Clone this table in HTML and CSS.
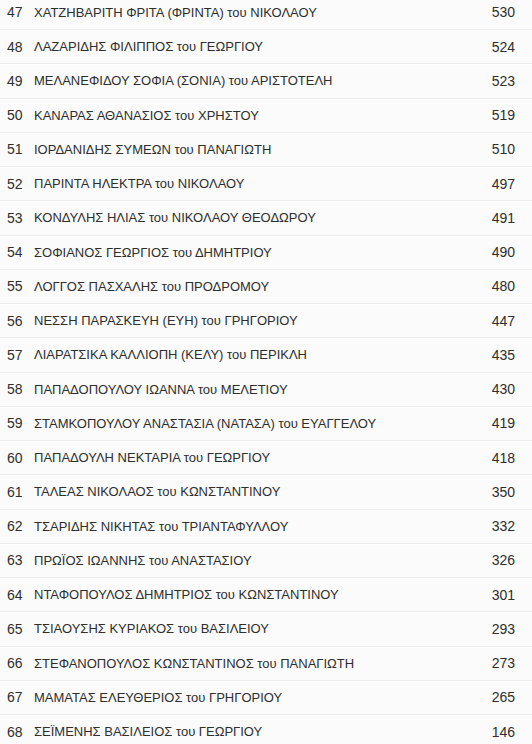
FILE: index.html
```html
<!DOCTYPE html>
<html lang="el">
<head>
<meta charset="utf-8">
<link rel="stylesheet" href="styles.css">
</head>
<body>
<table class="results">
<tbody>
<tr><td class="num">47</td><td class="name">ΧΑΤΖΗΒΑΡΙΤΗ ΦΡΙΤΑ (ΦΡΙΝΤΑ) του ΝΙΚΟΛΑΟΥ</td><td class="votes">530</td></tr>
<tr><td class="num">48</td><td class="name">ΛΑΖΑΡΙΔΗΣ ΦΙΛΙΠΠΟΣ του ΓΕΩΡΓΙΟΥ</td><td class="votes">524</td></tr>
<tr><td class="num">49</td><td class="name">ΜΕΛΑΝΕΦΙΔΟΥ ΣΟΦΙΑ (ΣΟΝΙΑ) του ΑΡΙΣΤΟΤΕΛΗ</td><td class="votes">523</td></tr>
<tr><td class="num">50</td><td class="name">ΚΑΝΑΡΑΣ ΑΘΑΝΑΣΙΟΣ του ΧΡΗΣΤΟΥ</td><td class="votes">519</td></tr>
<tr><td class="num">51</td><td class="name">ΙΟΡΔΑΝΙΔΗΣ ΣΥΜΕΩΝ του ΠΑΝΑΓΙΩΤΗ</td><td class="votes">510</td></tr>
<tr><td class="num">52</td><td class="name">ΠΑΡΙΝΤΑ ΗΛΕΚΤΡΑ του ΝΙΚΟΛΑΟΥ</td><td class="votes">497</td></tr>
<tr><td class="num">53</td><td class="name">ΚΟΝΔΥΛΗΣ ΗΛΙΑΣ του ΝΙΚΟΛΑΟΥ ΘΕΟΔΩΡΟΥ</td><td class="votes">491</td></tr>
<tr><td class="num">54</td><td class="name">ΣΟΦΙΑΝΟΣ ΓΕΩΡΓΙΟΣ του ΔΗΜΗΤΡΙΟΥ</td><td class="votes">490</td></tr>
<tr><td class="num">55</td><td class="name">ΛΟΓΓΟΣ ΠΑΣΧΑΛΗΣ του ΠΡΟΔΡΟΜΟΥ</td><td class="votes">480</td></tr>
<tr><td class="num">56</td><td class="name">ΝΕΣΣΗ ΠΑΡΑΣΚΕΥΗ (ΕΥΗ) του ΓΡΗΓΟΡΙΟΥ</td><td class="votes">447</td></tr>
<tr><td class="num">57</td><td class="name">ΛΙΑΡΑΤΣΙΚΑ ΚΑΛΛΙΟΠΗ (ΚΕΛΥ) του ΠΕΡΙΚΛΗ</td><td class="votes">435</td></tr>
<tr><td class="num">58</td><td class="name">ΠΑΠΑΔΟΠΟΥΛΟΥ ΙΩΑΝΝΑ του ΜΕΛΕΤΙΟΥ</td><td class="votes">430</td></tr>
<tr><td class="num">59</td><td class="name">ΣΤΑΜΚΟΠΟΥΛΟΥ ΑΝΑΣΤΑΣΙΑ (ΝΑΤΑΣΑ) του ΕΥΑΓΓΕΛΟΥ</td><td class="votes">419</td></tr>
<tr><td class="num">60</td><td class="name">ΠΑΠΑΔΟΥΛΗ ΝΕΚΤΑΡΙΑ του ΓΕΩΡΓΙΟΥ</td><td class="votes">418</td></tr>
<tr><td class="num">61</td><td class="name">ΤΑΛΕΑΣ ΝΙΚΟΛΑΟΣ του ΚΩΝΣΤΑΝΤΙΝΟΥ</td><td class="votes">350</td></tr>
<tr><td class="num">62</td><td class="name">ΤΣΑΡΙΔΗΣ ΝΙΚΗΤΑΣ του ΤΡΙΑΝΤΑΦΥΛΛΟΥ</td><td class="votes">332</td></tr>
<tr><td class="num">63</td><td class="name">ΠΡΩΪΟΣ ΙΩΑΝΝΗΣ του ΑΝΑΣΤΑΣΙΟΥ</td><td class="votes">326</td></tr>
<tr><td class="num">64</td><td class="name">ΝΤΑΦΟΠΟΥΛΟΣ ΔΗΜΗΤΡΙΟΣ του ΚΩΝΣΤΑΝΤΙΝΟΥ</td><td class="votes">301</td></tr>
<tr><td class="num">65</td><td class="name">ΤΣΙΑΟΥΣΗΣ ΚΥΡΙΑΚΟΣ του ΒΑΣΙΛΕΙΟΥ</td><td class="votes">293</td></tr>
<tr><td class="num">66</td><td class="name">ΣΤΕΦΑΝΟΠΟΥΛΟΣ ΚΩΝΣΤΑΝΤΙΝΟΣ του ΠΑΝΑΓΙΩΤΗ</td><td class="votes">273</td></tr>
<tr><td class="num">67</td><td class="name">ΜΑΜΑΤΑΣ ΕΛΕΥΘΕΡΙΟΣ του ΓΡΗΓΟΡΙΟΥ</td><td class="votes">265</td></tr>
<tr><td class="num">68</td><td class="name">ΣΕΪΜΕΝΗΣ ΒΑΣΙΛΕΙΟΣ του ΓΕΩΡΓΙΟΥ</td><td class="votes">146</td></tr>
</tbody>
</table>
</body>
</html>
```
FILE: styles.css
```css
html, body {
  margin: 0;
  padding: 0;
  background: #fbfbfb;
}
body {
  font-family: "Liberation Sans", Arial, sans-serif;
  font-size: 13px;
  color: #2e2e2e;
  overflow: hidden;
}
.results {
  width: 532px;
  border-collapse: collapse;
  margin-top: -4.75px;
}
.results tr {
  height: 34.25px;
  border-top: 1px solid #ececec;
}
.results tr:first-child {
  border-top: 0;
}
.results td {
  padding: 0;
  vertical-align: middle;
  box-shadow: inset 0 1px 0 #fff;
}
.num {
  width: 27px;
  padding-left: 7px !important;
  font-size: 14px;
}
.name {
  padding-left: 0;
}
.votes {
  text-align: right;
  padding-right: 17px !important;
  font-size: 14px;
}
```
